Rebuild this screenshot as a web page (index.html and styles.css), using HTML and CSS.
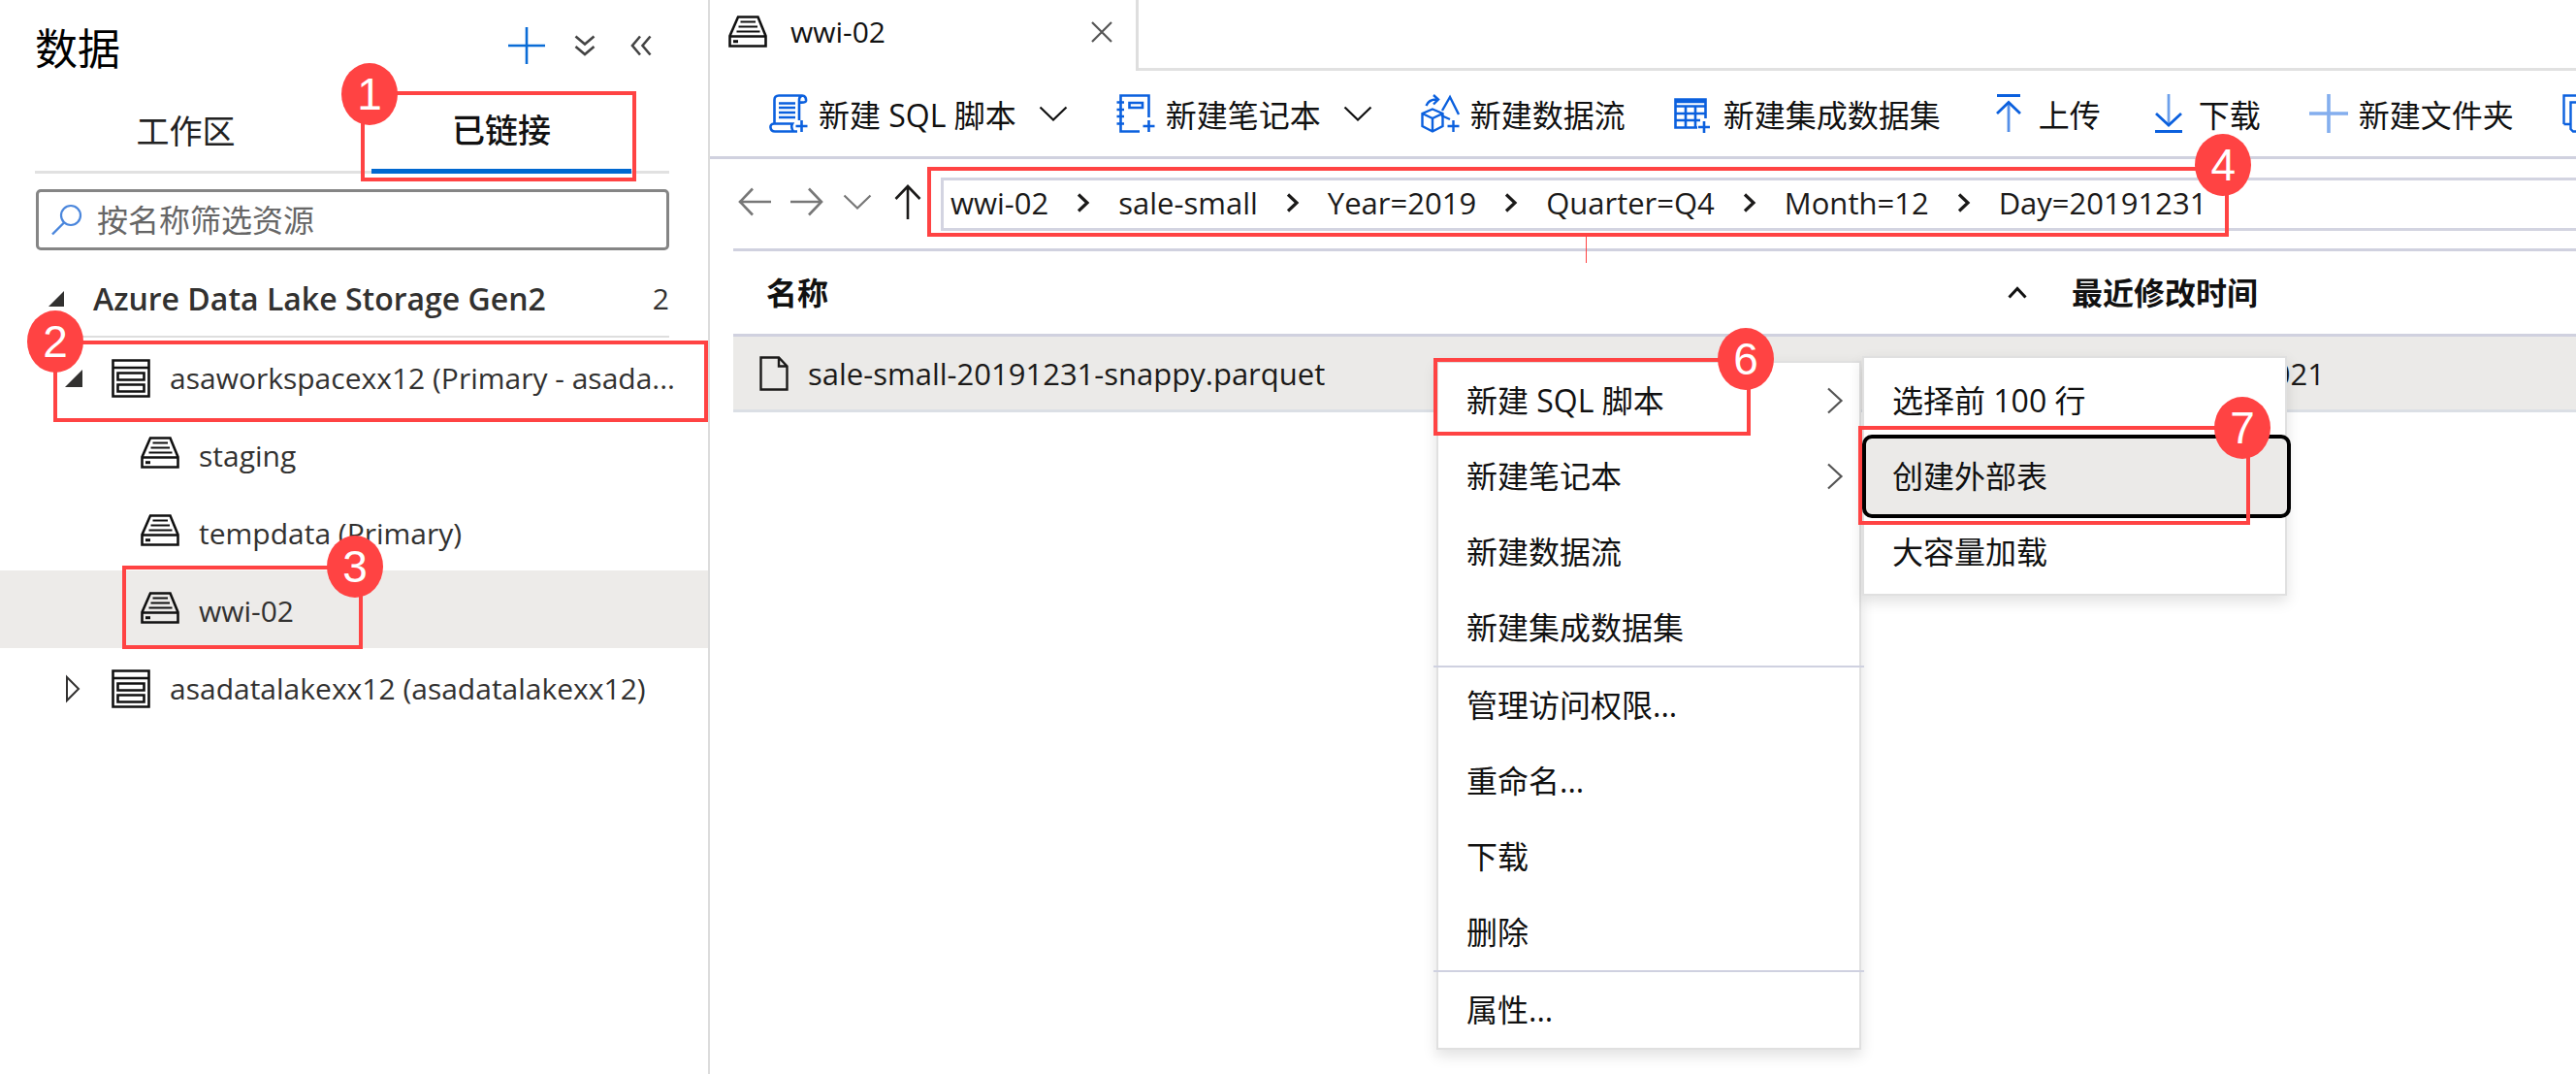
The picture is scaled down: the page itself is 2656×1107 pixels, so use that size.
FILE: index.html
```html
<!DOCTYPE html>
<html lang="zh-CN">
<head>
<meta charset="utf-8">
<title>数据</title>
<link rel="stylesheet" href="styles.css">
</head>
<body>
<svg class="sprite" aria-hidden="true">
  <symbol id="container" viewBox="0 0 40 33">
    <path d="M1.500 21 L10 1.500 H30.500 L38.500 21 V31.500 H1.500 Z M1.500 21.500 H38.500" fill="none" stroke="currentColor" stroke-width="2.600"/>
    <path d="M12.500 6.500 H28 M10.500 11.500 H30 M8.500 16.500 H32.500" stroke="currentColor" stroke-width="2.200"/>
    <path d="M5 26.700 H10" stroke="currentColor" stroke-width="3"/>
  </symbol>
  <symbol id="storage" viewBox="0 0 40 40">
    <path d="M1.500 1.500 H38.500 V38.500 H1.500 Z M1.500 9 H38.500 M6.500 14.500 H33.500 V21.500 H6.500 Z M6.500 26.500 H33.500 V33.500 H6.500 Z" fill="none" stroke="currentColor" stroke-width="2.600"/>
  </symbol>
  <symbol id="chev-down" viewBox="0 0 30 16">
    <path d="M1.500 1.500 L15 14.500 L28.500 1.500" fill="none" stroke="currentColor" stroke-width="2.200"/>
  </symbol>
  <symbol id="chev-right" viewBox="0 0 18 28">
    <path d="M2 1.500 L15.500 14 L2 26.500" fill="none" stroke="currentColor" stroke-width="2.200"/>
  </symbol>
  <symbol id="crumb-sep" viewBox="0 0 14 20">
    <path d="M2 1.500 L11 10 L2 18.500" fill="none" stroke="currentColor" stroke-width="3.200"/>
  </symbol>
</svg>
<div class="app">
  <aside class="sidebar">
    <header class="side-head">
      <h1>数据</h1>
      <button class="icon-btn blue" aria-label="+"><svg width="38" height="38" viewBox="0 0 38 38"><path d="M0 19 H38 M19 0 V38" stroke="currentColor" stroke-width="2.600"/></svg></button>
      <button class="icon-btn" aria-label="全部折叠"><svg width="22" height="22" viewBox="0 0 22 22"><path d="M1.500 1.500 L11 9.500 L20.500 1.500 M1.500 12 L11 20 L20.500 12" fill="none" stroke="currentColor" stroke-width="2.600"/></svg></button>
      <button class="icon-btn" aria-label="收起"><svg width="22" height="22" viewBox="0 0 22 22"><path d="M10 1.500 L2 11 L10 20.500 M20.500 1.500 L12.500 11 L20.500 20.500" fill="none" stroke="currentColor" stroke-width="2.600"/></svg></button>
    </header>
    <nav class="side-tabs">
      <button class="side-tab">工作区</button>
      <button class="side-tab selected">已链接<span class="mark mark-1"></span><span class="badge badge-1">1</span></button>
    </nav>
    <label class="search">
      <svg width="34" height="34" viewBox="0 0 34 34"><circle cx="21" cy="12" r="10" fill="none" stroke="#4a86dc" stroke-width="2.200"/><path d="M14 19.500 L2 31.500" stroke="#4a86dc" stroke-width="2.400"/></svg>
      <input type="text" placeholder="按名称筛选资源" aria-label="按名称筛选资源">
    </label>
    <div class="group">
      <svg width="18" height="18" viewBox="0 0 18 18"><path d="M17 1 V17 H1 Z" fill="#323130"/></svg>
      <h2>Azure Data Lake Storage Gen2</h2>
      <span class="count">2</span>
    </div>
    <ul class="tree">
      <li class="node account"><svg class="twist" viewBox="0 0 20 20"><path d="M19 1 V19 H1 Z" fill="#323130"/></svg><svg class="ic-storage"><use href="#storage"/></svg><span>asaworkspacexx12 (Primary - asada...</span><span class="mark mark-2"></span><span class="badge badge-2">2</span></li>
      <li class="node child"><svg class="ic-container"><use href="#container"/></svg><span>staging</span></li>
      <li class="node child"><svg class="ic-container"><use href="#container"/></svg><span>tempdata (Primary)</span></li>
      <li class="node child current"><svg class="ic-container"><use href="#container"/></svg><span>wwi-02</span><span class="mark mark-3"></span><span class="badge badge-3">3</span></li>
      <li class="node account"><svg class="twist closed" viewBox="0 0 20 30"><path d="M3 3 L15 15 L3 27 Z" fill="none" stroke="#323130" stroke-width="2"/></svg><svg class="ic-storage"><use href="#storage"/></svg><span>asadatalakexx12 (asadatalakexx12)</span></li>
    </ul>
  </aside>
  <main class="main">
    <div class="tabstrip">
      <div class="doc-tab"><svg class="ic-container"><use href="#container"/></svg><span>wwi-02</span>
        <button class="close" aria-label="关闭"><svg width="22" height="22" viewBox="0 0 22 22"><path d="M1 1 L21 21 M21 1 L1 21" stroke="#555" stroke-width="2.200"/></svg></button></div>
      <div class="tab-rest"></div>
    </div>
    <div class="toolbar">
      <button class="tool"><svg class="tool-ic" viewBox="0 0 40 40"><g fill="none" stroke="currentColor" stroke-width="2.600"><path d="M5.500 30 V6 Q5.500 1.500 10 1.500 H34 Q38.500 2 38 7 Q37.500 9 31.500 8.500 M34 1.500 Q31 2.500 31 6 V27 M5 30.500 H24 Q22 34 25 38.500 M5 30.500 Q1 31 1.500 34.500 Q2 38.500 6 38.500 H29"/><path d="M10 9.500 H27 M10 14 H27 M10 19 H27 M10 24 H27"/><path d="M33.500 27 V39 M27.500 33 H39.500"/></g></svg><span>新建 SQL 脚本</span><svg class="chev"><use href="#chev-down"/></svg></button>
      <button class="tool"><svg class="tool-ic" viewBox="0 0 40 40"><g fill="none" stroke="currentColor" stroke-width="2.600"><path d="M33.500 24 V1.500 H4.500 V38.500 H24"/><path d="M0.500 8.500 H8 M0.500 16 H8 M0.500 23 H8 M0.500 30.500 H8"/><path d="M13.500 9 H27 V14 H13.500 Z"/><path d="M33.500 27 V39 M27.500 33 H39.500"/></g></svg><span>新建笔记本</span><svg class="chev"><use href="#chev-down"/></svg></button>
      <button class="tool"><svg class="tool-ic" viewBox="0 0 40 40"><g fill="none" stroke="currentColor" stroke-width="2.400"><path d="M12 15.500 L22.500 20 V33 L12 38.500 L1.500 33 V20 Z M1.500 20 L12 25 L22.500 20 M12 25 V38"/><path d="M5.500 12 Q8 5.500 16 5.500 M13 1 L18 5.500 L13 10.500"/><path d="M22 17 L30 3 L39 21 M21 22 L30 26"/><path d="M33.500 27 V39 M27.500 33 H39.500"/></g></svg><span>新建数据流</span></button>
      <button class="tool"><svg class="tool-ic" viewBox="0 0 40 40"><g fill="none" stroke="currentColor" stroke-width="2.600"><path d="M32.500 25 V5.500 H1.500 V34.500 H24 M1.500 12.500 H32.500 M1.500 20 H32.500 M1.500 27 H27 M12 12 V34.500 M22 12 V34.500 M1.500 8 H32.500"/><path d="M31 28 V40 M25 34 H37"/></g></svg><span>新建集成数据集</span></button>
      <button class="tool"><svg class="tool-ic" viewBox="0 0 40 40"><g fill="none" stroke="currentColor" stroke-width="2.800"><path d="M8 1.500 H32 M8 20 L20 8.500 L32 20"/><path d="M20 9 V39" opacity=".7"/></g></svg><span>上传</span></button>
      <button class="tool"><svg class="tool-ic" viewBox="0 0 40 40"><g fill="none" stroke="currentColor" stroke-width="2.800"><path d="M6 38.500 H34 M7 20 L20 32 L33 20"/><path d="M20 0 V32" opacity=".6"/></g></svg><span>下载</span></button>
      <button class="tool"><svg class="tool-ic" viewBox="0 0 40 40"><path d="M0 20 H40 M20 0 V40" stroke="currentColor" stroke-width="3.600" opacity=".5"/></svg><span>新建文件夹</span></button>
      <button class="tool" aria-label="复制"><svg class="tool-ic" viewBox="0 0 40 40"><g fill="none" stroke="currentColor" stroke-width="2.400"><path d="M1.500 31 V1.500 H26 V8 M1.500 31 H8 M8.500 8.500 H36 V38.500 H11 L8.500 36 Z M14 23 H30 M22 15 V31"/></g></svg></button>
    </div>
    <div class="pathbar">
      <button class="nav-btn dim" aria-label="后退"><svg width="34" height="30" viewBox="0 0 34 30"><path d="M34 15 H2 M15 1.500 L2 15 L15 28.500" fill="none" stroke="currentColor" stroke-width="2.600"/></svg></button>
      <button class="nav-btn dim" aria-label="前进"><svg width="34" height="30" viewBox="0 0 34 30"><path d="M0 15 H32 M19 1.500 L32 15 L19 28.500" fill="none" stroke="currentColor" stroke-width="2.600"/></svg></button>
      <button class="nav-btn dim" aria-label="历史"><svg class="chev"><use href="#chev-down"/></svg></button>
      <button class="nav-btn up" aria-label="向上"><svg width="28" height="36" viewBox="0 0 28 36"><path d="M14 36 V2 M1.500 15 L14 2 L26.500 15" fill="none" stroke="currentColor" stroke-width="2.600"/></svg></button>
      <div class="crumbs">
        <div class="crumb-list">
          <a href="#">wwi-02</a><svg class="sep"><use href="#crumb-sep"/></svg>
          <a href="#">sale-small</a><svg class="sep"><use href="#crumb-sep"/></svg>
          <a href="#">Year=2019</a><svg class="sep"><use href="#crumb-sep"/></svg>
          <a href="#">Quarter=Q4</a><svg class="sep"><use href="#crumb-sep"/></svg>
          <a href="#">Month=12</a><svg class="sep"><use href="#crumb-sep"/></svg>
          <a href="#">Day=20191231</a>
          <span class="mark mark-4"></span><span class="stem"></span><span class="badge badge-4">4</span>
        </div>
      </div>
    </div>
    <section class="files">
      <table>
        <thead>
          <tr><th class="col-name"><div class="th"><span>名称</span><svg width="20" height="13" viewBox="0 0 20 13"><path d="M1.500 11.500 L10 2.500 L18.500 11.500" fill="none" stroke="currentColor" stroke-width="3"/></svg></div></th><th class="col-date">最近修改时间</th></tr>
        </thead>
        <tbody>
          <tr><td><div class="file"><svg width="30" height="36" viewBox="0 0 30 36"><path d="M1.500 1.500 H20 L28.500 10.500 V34.500 H1.500 Z M20 1.500 V10.500 H28.500" fill="none" stroke="currentColor" stroke-width="2.400"/></svg><span>sale-small-20191231-snappy.parquet</span></div></td><td class="date">2021</td></tr>
        </tbody>
      </table>
      <div class="menu context">
        <button class="item">新建 SQL 脚本<svg class="more"><use href="#chev-right"/></svg></button>
        <button class="item">新建笔记本<svg class="more"><use href="#chev-right"/></svg></button>
        <button class="item">新建数据流</button>
        <button class="item">新建集成数据集</button>
        <hr>
        <button class="item">管理访问权限...</button>
        <button class="item">重命名...</button>
        <button class="item">下载</button>
        <button class="item">删除</button>
        <hr>
        <button class="item">属性...</button>
        <span class="mark mark-6"></span><span class="badge badge-6">6</span>
      </div>
      <div class="menu submenu">
        <button class="item">选择前 100 行</button>
        <button class="item focused">创建外部表</button>
        <button class="item">大容量加载</button>
        <span class="mark mark-7"></span><span class="badge badge-7">7</span>
      </div>
    </section>
  </main>
</div>
</body>
</html>
```
FILE: styles.css
```css
* { box-sizing: border-box; }
body {
  margin: 0;
  background: #fff;
  color: #1b1a19;
  font: 30px/40px "Open Sans", "Noto Sans CJK SC", sans-serif;
}
button, input { font: inherit; color: inherit; }
button { padding: 0; border: 0; background: none; }
svg { flex: none; display: block; }
.sprite { position: absolute; width: 0; height: 0; }
.app { display: flex; min-height: 100vh; overflow: hidden; white-space: nowrap; }

/* sidebar */
.sidebar { flex: none; width: 732px; border-right: 2px solid #dcdcdc; }
.side-head { display: flex; align-items: center; height: 94px; padding: 0 58px 0 36px; }
h1 { flex: 1; margin: 0; padding-top: 6px; font-size: 44px; line-height: 60px; font-weight: 400; color: #000; }
.icon-btn { color: #444; margin-left: 36px; }
.icon-btn:nth-of-type(2) { margin-left: 30px; }
.blue { color: #0a6cd6; }
.side-tabs { display: flex; height: 85px; margin: 0 40px 16px 36px; border-bottom: 3px solid #e1e1e1; }
.side-tab { position: relative; flex: 1; margin-bottom: -3px; padding: 0 36px 4px 0; font-size: 34px; color: #222; }
.side-tab.selected { flex: none; width: 268px; margin-right: 39px; padding: 0; border-bottom: 5px solid #0068d0; font-weight: 500; color: #111; }
.search { display: flex; align-items: center; gap: 14px; height: 63px; margin: 0 40px 0 37px; padding: 0 12px; border: 3px solid #858585; border-radius: 5px; }
.search input { flex: 1; min-width: 0; padding: 0; border: 0; outline: 0; background: none; font-size: 32px; }
.search input::placeholder { color: #666; opacity: 1; }
.group { display: flex; align-items: center; gap: 29px; height: 90px; margin: 0 40px 0 37px; padding: 20px 0 8px 12px; border-bottom: 2px solid #dedede; }
h2 { flex: 1; margin: 0; font-size: 32px; line-height: 40px; font-weight: 600; color: #323130; }
.count { color: #323130; }
.tree { margin: 0; padding: 0; list-style: none; color: #323130; }
.node { position: relative; display: flex; align-items: center; height: 80px; padding-top: 3px; }
.account { gap: 20px; padding-left: 66px; }
.child { gap: 20px; padding-left: 145px; }
.current { background: #edebe9; }
.twist { width: 20px; height: 20px; margin-right: 9px; }
.twist.closed { height: 30px; }
.ic-storage { width: 40px; height: 40px; color: #111; }
.ic-container { width: 40px; height: 33px; color: #111; }
.child .ic-container { margin-bottom: 6px; }

/* document area */
.main { flex: 1; min-width: 0; }
.tabstrip { display: flex; height: 73px; }
.doc-tab { display: flex; align-items: center; gap: 24px; width: 442px; padding: 0 24px 8px 19px; border-right: 3px solid #dedede; color: #111; }
.close { margin-left: auto; }
.tab-rest { flex: 1; border-bottom: 3px solid #e1e1e1; }
.toolbar { display: flex; align-items: center; gap: 50px; height: 91px; padding: 0 0 1px 61px; border-bottom: 3px solid #d0d1df; overflow: hidden; font-size: 32px; color: #111; }
.tool { display: flex; flex: none; align-items: center; gap: 11px; }
.tool span { padding-top: 4px; }
.tool-ic { width: 40px; height: 40px; color: #0b60de; }
.chev { width: 30px; height: 16px; }
.tool .chev { margin-left: 12px; }
.pathbar { display: flex; align-items: center; height: 92px; padding-left: 29px; gap: 20px; }
.nav-btn { padding-bottom: 4px; }
.nav-btn.dim { color: #777; }
.nav-btn.up { margin-left: 3px; }
.crumbs { flex: 1; height: 55px; margin-right: -4px; border: 3px solid #d3d4e1; font-size: 31px; }
.crumb-list { position: relative; display: inline-flex; align-items: center; gap: 29px; height: 49px; padding: 0 0 3px 7px; }
.crumb-list a { color: #1b1a19; text-decoration: none; }
.sep { width: 14px; height: 20px; }

/* file list */
.files { position: relative; margin-left: 24px; }
table { width: 100%; border-collapse: collapse; table-layout: fixed; border-top: 3px solid #d0d1df; }
th { height: 88px; padding: 0; border-bottom: 3px solid #d0d1df; font-size: 32px; font-weight: 700; text-align: left; color: #111; }
.col-name { width: 1380px; }
.th { display: flex; align-items: center; justify-content: space-between; padding: 0 46px 0 34px; }
td { height: 78px; padding: 0; background: #ebeae8; border-bottom: 3px solid #dbdfe5; font-size: 31px; }
.file { display: flex; align-items: center; gap: 20px; padding-left: 27px; }
.date { padding-left: 190px; }

/* menus */
.menu { position: absolute; width: 438px; background: #fff; border: 2px solid #e0e0e0; box-shadow: 0 6px 14px rgba(0, 0, 0, .12); font-size: 32px; color: #111; }
.context { left: 725px; top: 116px; }
.submenu { left: 1164px; top: 111px; height: 247px; padding-top: 5px; }
.item { display: flex; align-items: center; justify-content: space-between; width: 100%; height: 78px; padding: 0 16px 0 29px; }
.more { width: 18px; height: 28px; color: #555; }
.menu hr { height: 2px; margin: 0 -5px; border: 0; background: #cfd1e0; }
.item.focused { position: relative; height: 86px; width: 442px; margin: -4px -2px; padding-left: 27px; border: 4px solid #000; border-radius: 10px; background: #ebeae8; }

/* numbered callouts */
.mark { position: absolute; z-index: 2; border: 4px solid #ff4343; pointer-events: none; }
.badge { position: absolute; z-index: 3; width: 58px; height: 64px; border-radius: 50%; background: #ff4343; color: #fff; font: 46px/64px "Liberation Sans", sans-serif; text-align: center; }
.mark-1 { left: -11px; top: 0; right: -5px; bottom: -13px; }
.badge-1 { left: -31px; top: -29px; }
.mark-2 { left: 55px; top: 3px; right: 0; bottom: -7px; }
.badge-2 { left: 28px; top: -28px; }
.mark-3 { left: 126px; top: -5px; width: 248px; height: 86px; }
.badge-3 { left: 337px; top: -36px; }
.mark-4 { left: -17px; top: -14px; right: -23px; bottom: -9px; }
.badge-4 { right: -46px; top: -48px; }
.stem { position: absolute; left: 662px; top: 58px; width: 1px; height: 27px; background: #ff4343; z-index: 2; }
.mark-6 { left: -5px; top: -5px; width: 327px; height: 80px; }
.badge-6 { left: 288px; top: -36px; }
.mark-7 { left: -6px; top: 70px; width: 404px; height: 102px; }
.badge-7 { left: 361px; top: 40px; }
```
